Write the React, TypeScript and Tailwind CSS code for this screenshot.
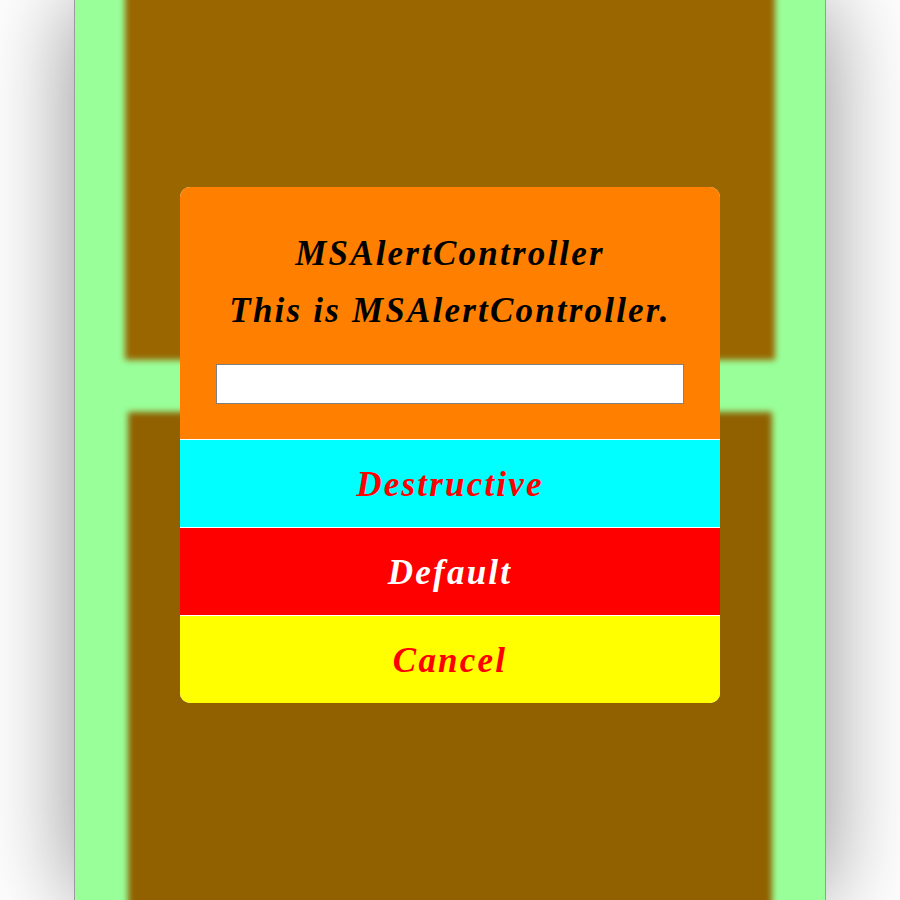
const serif = "font-['Liberation_Serif','Times_New_Roman',serif] font-bold italic tracking-[2.2px]";

const actions = [
	{ label: "Destructive", bg: "bg-[#00ffff]", fg: "text-[#ff0000]" },
	{ label: "Default", bg: "bg-[#ff0000]", fg: "text-white" },
	{ label: "Cancel", bg: "bg-[#ffff00]", fg: "text-[#ff0000]" },
];

const App = () => {
	return (
		<div className="w-[900px] h-[900px] bg-white flex justify-center overflow-hidden">
			<div className="relative w-[752px] h-[900px] border-x border-[#9a9a9a] bg-[#99ff99] shadow-[0_0_90px_rgba(0,0,0,0.45)] overflow-hidden">
				<div className="flex flex-col gap-[52px] -mt-[30px] blur-[3px]">
					<div className="mx-[50px] h-[390px] bg-[#996600]" />
					<div className="mx-[53px] h-[540px] bg-[#916100]" />
				</div>
				<div className="absolute top-[187px] left-1/2 -translate-x-1/2 w-[540px] rounded-[10px] overflow-hidden flex flex-col gap-px bg-white">
					<div className="bg-[#ff8000] flex flex-col items-center pt-[47px] pb-[35px] px-[36px]">
						<div className={`${serif} text-[35px] leading-[40px] text-black`}>MSAlertController</div>
						<div className={`${serif} text-[35px] leading-[40px] text-black mt-[17px]`}>This is MSAlertController.</div>
						<input className="mt-[33px] w-full h-[40px] bg-white border border-[#808080] outline-none" />
					</div>
					{actions.map((action) => (
						<div key={action.label} className={`h-[87px] flex items-center justify-center pt-[3px] ${action.bg}`}>
							<span className={`${serif} text-[35px] ${action.fg}`}>{action.label}</span>
						</div>
					))}
				</div>
			</div>
		</div>
	);
};

export default App;
